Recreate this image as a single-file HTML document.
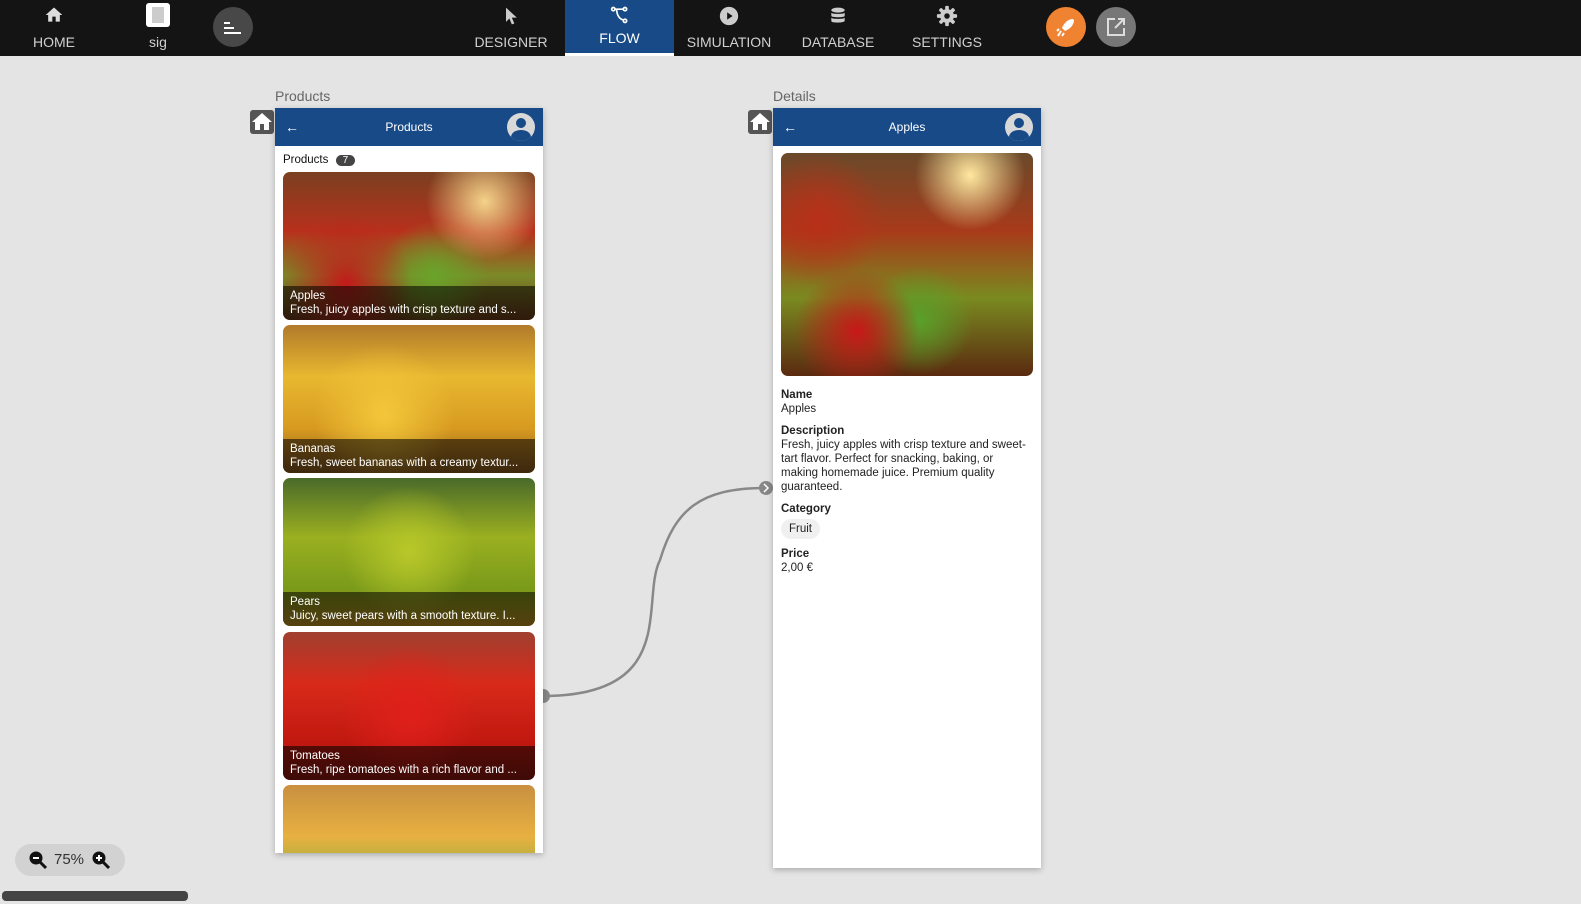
<!DOCTYPE html>
<html><head><meta charset="utf-8"><style>
*{box-sizing:border-box;margin:0;padding:0}
body{width:1581px;height:904px;background:#e4e4e4;font-family:"Liberation Sans",sans-serif;position:relative;overflow:hidden}
.nav{position:absolute;left:0;top:0;width:1581px;height:56px;background:#141414}
.ni{position:absolute;top:0;height:56px;color:#d0d0d0;font-size:14px;text-align:center}
.ni span{position:absolute;bottom:6px;left:0;right:0}
.ni svg{position:absolute;top:5px;left:50%;transform:translateX(-50%)}
.flow{background:#174a87;color:#fff;border-bottom:3px solid #fff}
.lbl{position:absolute;color:#666;font-size:14px}
.panel{position:absolute;background:#fff;box-shadow:0 2px 6px rgba(0,0,0,.25);overflow:hidden}
.hdr{height:38px;background:#174a87;color:#fff;font-size:12px;position:relative;text-align:center;line-height:38px}
.hdr .ar{position:absolute;left:10px;top:0;font-size:14px}
.hdr .av{position:absolute;right:8px;top:5px;width:28px;height:28px;border-radius:50%;background:#d8d8d8;overflow:hidden}
.homeb{position:absolute;width:24px;height:24px;background:#555;border-radius:3px}
.card{position:absolute;left:8px;width:252px;height:148px;border-radius:7px;overflow:hidden}
.cap{position:absolute;left:0;right:0;bottom:0;height:34px;background:rgba(0,0,0,.55);color:#fff;font-size:11.5px;padding:3px 7px;line-height:14px;white-space:nowrap}
.f{font-size:11.5px;color:#222;line-height:14px}
.f b{font-weight:bold;display:block}
</style></head><body>
<div class="nav">
 <div class="ni" style="left:24px;width:60px"><svg width="20" height="20" viewBox="0 0 24 24"><path d="M10 20v-6h4v6h5v-8h3L12 3 2 12h3v8z" fill="#ddd"/></svg><span>HOME</span></div>
 <div class="ni" style="left:138px;width:40px"><div style="position:absolute;left:8px;top:3px;width:24px;height:24px;background:#fff;border-radius:3px"><div style="position:absolute;left:6px;top:4px;width:12px;height:16px;background:#ccc"></div></div><span>sig</span></div>
 <div style="position:absolute;left:213px;top:7px;width:40px;height:40px;border-radius:50%;background:#484848"><div style="position:absolute;left:11px;top:15px;width:6px;height:2px;background:#fff"></div><div style="position:absolute;left:11px;top:20px;width:10px;height:2px;background:#fff"></div><div style="position:absolute;left:11px;top:25px;width:17px;height:2px;background:#fff"></div></div>
 <div class="ni" style="left:470px;width:82px"><svg width="20" height="22" viewBox="0 0 24 24"><path d="M6 2l13 12h-6l3 7-3 1-3-7-4 4z" fill="#ccc"/></svg><span>DESIGNER</span></div>
 <div class="ni flow" style="left:565px;width:109px"><svg width="22" height="20" viewBox="0 0 24 24" fill="none" stroke="#fff" stroke-width="2"><circle cx="4" cy="5" r="2"/><circle cx="18" cy="5" r="2"/><circle cx="18" cy="19" r="2"/><path d="M6 5h10M8 5c0 8 4 12 8 13"/></svg><span style="bottom:7px">FLOW</span></div>
 <div class="ni" style="left:680px;width:98px"><svg width="22" height="22" viewBox="0 0 24 24"><circle cx="12" cy="12" r="10" fill="#ccc"/><path d="M10 8l6 4-6 4z" fill="#141414"/></svg><span>SIMULATION</span></div>
 <div class="ni" style="left:795px;width:86px"><svg width="20" height="22" viewBox="0 0 24 24" fill="#ccc"><ellipse cx="12" cy="5" rx="8" ry="3"/><path d="M4 8c0 2 16 2 16 0v4c0 2-16 2-16 0zM4 14c0 2 16 2 16 0v4c0 2-16 3-16 0z"/></svg><span>DATABASE</span></div>
 <div class="ni" style="left:905px;width:84px"><svg width="22" height="22" viewBox="0 0 24 24"><g fill="#ccc"><rect x="10" y="1" width="4" height="22" rx="1"/><rect x="10" y="1" width="4" height="22" rx="1" transform="rotate(45 12 12)"/><rect x="10" y="1" width="4" height="22" rx="1" transform="rotate(90 12 12)"/><rect x="10" y="1" width="4" height="22" rx="1" transform="rotate(135 12 12)"/><circle cx="12" cy="12" r="7.5"/></g><circle cx="12" cy="12" r="3" fill="#141414"/></svg><span>SETTINGS</span></div>
 <div style="position:absolute;left:1046px;top:7px;width:40px;height:40px;border-radius:50%;background:#f08332"><svg width="40" height="40" viewBox="0 0 40 40"><path d="M27 12c-5 0-9 4-11 9l3 3c5-2 9-6 9-11z" fill="#fff"/><path d="M15 24l-3 5M18 26l-2 3M13 22l-2 2" stroke="#fff" stroke-width="2"/></svg></div>
 <div style="position:absolute;left:1096px;top:7px;width:40px;height:40px;border-radius:50%;background:#777"><svg width="40" height="40" viewBox="0 0 40 40" fill="none" stroke="#ddd" stroke-width="2"><path d="M19 12h-7v16h16v-7M22 12h6v6M28 12l-9 9"/></svg></div>
</div>

<div class="lbl" style="left:275px;top:88px">Products</div>
<div class="lbl" style="left:773px;top:88px">Details</div>
<div class="homeb" style="left:250px;top:110px"><svg width="24" height="24" viewBox="0 0 24 24"><path d="M10 20v-6h4v6h5v-8h3L12 3 2 12h3v8z" fill="#fff"/></svg></div>
<div class="homeb" style="left:748px;top:110px"><svg width="24" height="24" viewBox="0 0 24 24"><path d="M10 20v-6h4v6h5v-8h3L12 3 2 12h3v8z" fill="#fff"/></svg></div>

<svg style="position:absolute;left:0;top:0" width="1581" height="904"><path d="M543 696C680 696 640 600 660 560C675 510 700 488 765 488" fill="none" stroke="#888" stroke-width="2.5"/><circle cx="543" cy="696" r="7" fill="#888"/><circle cx="766" cy="488" r="7" fill="#888"/><path d="M764 484l4 4-4 4" stroke="#fff" stroke-width="1.5" fill="none"/></svg>

<div class="panel" style="left:275px;top:108px;width:268px;height:745px">
 <div class="hdr"><span class="ar">←</span>Products<div class="av"><div style="position:absolute;left:9px;top:5px;width:10px;height:10px;border-radius:50%;background:#174a87"></div><div style="position:absolute;left:4px;top:17px;width:20px;height:14px;border-radius:50%;background:#174a87"></div></div></div>
 <div style="position:absolute;left:8px;top:46px;font-size:11.5px;color:#111">Products <span style="display:inline-block;background:#444;color:#fff;border-radius:7px;padding:0 7px;font-size:10px;margin-left:4px">7</span></div>
 <div class="card" style="top:64px;background:radial-gradient(circle at 80% 20%,#f4d38a 0,transparent 25%),radial-gradient(circle at 25% 75%,#c21a1a,transparent 30%),radial-gradient(circle at 60% 70%,#6aa32a,transparent 30%),linear-gradient(#7a4020,#b8301c 40%,#7b8a28 70%,#6b3a1a)"><div class="cap">Apples<br>Fresh, juicy apples with crisp texture and s...</div></div>
 <div class="card" style="top:217px;background:radial-gradient(circle at 40% 60%,#f3c73a,transparent 40%),linear-gradient(#b07a2a,#e8b830 35%,#d79a20 70%,#8a5a20)"><div class="cap">Bananas<br>Fresh, sweet bananas with a creamy textur...</div></div>
 <div class="card" style="top:370px;background:radial-gradient(circle at 50% 50%,#b8c82a,transparent 45%),linear-gradient(#4a6a2a,#9ab020 40%,#7a9a1a 75%,#c09020)"><div class="cap">Pears<br>Juicy, sweet pears with a smooth texture. I...</div></div>
 <div class="card" style="top:524px;background:radial-gradient(circle at 50% 55%,#e0201a,transparent 45%),linear-gradient(#a04030,#d82a1a 35%,#c01810 75%,#8a1a10)"><div class="cap">Tomatoes<br>Fresh, ripe tomatoes with a rich flavor and ...</div></div>
 <div class="card" style="top:677px;background:linear-gradient(#c89040,#e8b040 35%,#9ab040 60%,#4a7a2a)"></div>
</div>

<div class="panel" style="left:773px;top:108px;width:268px;height:760px">
 <div class="hdr"><span class="ar">←</span>Apples<div class="av"><div style="position:absolute;left:9px;top:5px;width:10px;height:10px;border-radius:50%;background:#174a87"></div><div style="position:absolute;left:4px;top:17px;width:20px;height:14px;border-radius:50%;background:#174a87"></div></div></div>
 <div style="position:absolute;left:8px;top:45px;width:252px;height:223px;border-radius:7px;background:radial-gradient(circle at 75% 10%,#ffe8a0,transparent 20%),radial-gradient(circle at 30% 80%,#c81818,transparent 25%),radial-gradient(circle at 55% 75%,#5aa02a,transparent 25%),radial-gradient(circle at 15% 30%,#b83018,transparent 25%),linear-gradient(#6a4a2a,#a83a1a 35%,#7a8a20 65%,#5a2a10)"></div>
 <div class="f" style="position:absolute;left:8px;top:280px;width:256px"><b>Name</b>Apples</div>
 <div class="f" style="position:absolute;left:8px;top:316px;width:256px"><b>Description</b>Fresh, juicy apples with crisp texture and sweet-<br>tart flavor. Perfect for snacking, baking, or<br>making homemade juice. Premium quality<br>guaranteed.</div>
 <div class="f" style="position:absolute;left:8px;top:394px"><b>Category</b><span style="display:inline-block;margin-top:3px;background:#f0f0f0;border-radius:10px;padding:3px 8px">Fruit</span></div>
 <div class="f" style="position:absolute;left:8px;top:439px"><b>Price</b>2,00 €</div>
</div>

<div style="position:absolute;left:15px;top:844px;width:110px;height:32px;border-radius:16px;background:#d2d2d2;font-size:15px;color:#333;line-height:32px">
 <svg style="position:absolute;left:13px;top:6px" width="20" height="20" viewBox="0 0 20 20"><circle cx="8" cy="8" r="6.5" fill="#111"/><path d="M5 8h6" stroke="#fff" stroke-width="2"/><path d="M12 12l6 6" stroke="#111" stroke-width="3"/></svg>
 <span style="position:absolute;left:39px">75%</span>
 <svg style="position:absolute;left:76px;top:6px" width="20" height="20" viewBox="0 0 20 20"><circle cx="8" cy="8" r="6.5" fill="#111"/><path d="M5 8h6M8 5v6" stroke="#fff" stroke-width="2"/><path d="M12 12l6 6" stroke="#111" stroke-width="3"/></svg>
</div>
<div style="position:absolute;left:2px;top:891px;width:186px;height:10px;border-radius:4px;background:#444"></div>
</body></html>
